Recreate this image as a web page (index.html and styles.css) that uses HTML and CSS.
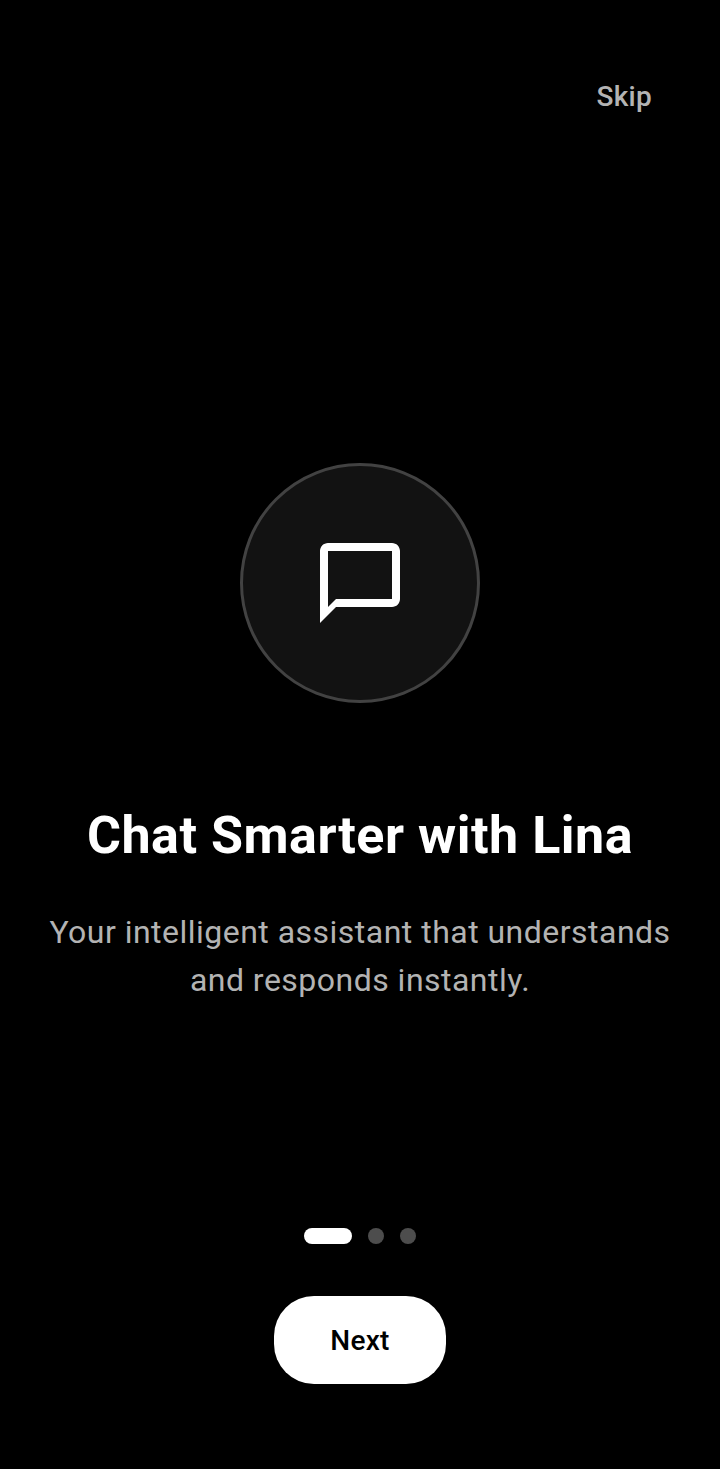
FILE: index.html
```html
<!DOCTYPE html>
<html lang="en">
<head>
<meta charset="utf-8">
<meta name="viewport" content="width=device-width, initial-scale=1">
<title>Chat Smarter with Lina</title>
<link rel="stylesheet" href="styles.css">
</head>
<body>
<div class="screen">
  <header class="top"><button class="skip" type="button">Skip</button></header>
  <main class="slide">
    <div class="badge">
      <svg class="icon" viewBox="0 0 24 24" aria-hidden="true"><path fill="currentColor" fill-rule="evenodd" d="M4 2h16c1.100 0 2 .9 2 2v12c0 1.100-.9 2-2 2H6l-4 4V4c0-1.100.9-2 2-2zm0 2v14l2-2h14V4H4z"/></svg>
    </div>
    <h1 class="title">Chat Smarter with Lina</h1>
    <p class="text">Your intelligent assistant that understands and responds instantly.</p>
  </main>
  <footer class="bottom">
    <div class="dots"><span class="dot active"></span><span class="dot"></span><span class="dot"></span></div>
    <button class="next" type="button">Next</button>
  </footer>
</div>
</body>
</html>
```

FILE: styles.css
```css
* { box-sizing: border-box; }
body { margin: 0; background: #000; color: #fff; font-family: Roboto, sans-serif; }
.screen { min-height: 100vh; display: flex; flex-direction: column; }
button { border: 0; font: inherit; cursor: pointer; }
.top { display: flex; justify-content: flex-end; padding: 48px 32px 0; }
.skip { height: 96px; padding: 0 36px; background: none; color: #b3b3b3; font-size: 28px; font-weight: 500; letter-spacing: 0.01em; }
.slide { flex: 1; display: flex; flex-direction: column; align-items: center; justify-content: center; padding: 94px 40px 0; text-align: center; }
.badge { width: 240px; height: 240px; display: grid; place-items: center; border: 3px solid #424242; border-radius: 50%; background: #121212; }
.icon { width: 96px; height: 96px; }
.title { margin: 96px 0 0; font-size: 52px; line-height: 74px; font-weight: 700; letter-spacing: 0.01em; }
.text { margin: 35px 0 0; color: #b3b3b3; font-size: 32px; line-height: 48px; letter-spacing: 0.015em; }
.bottom { display: flex; flex-direction: column; align-items: center; gap: 52px; padding-bottom: 85px; }
.dots { display: flex; gap: 16px; }
.dot { width: 16px; height: 16px; border-radius: 8px; background: #4d4d4d; }
.active { width: 48px; background: #fff; }
.next { height: 88px; padding: 0 56px; border-radius: 40px; background: #fff; color: #000; font-size: 28px; font-weight: 500; letter-spacing: 0.01em; }
```
